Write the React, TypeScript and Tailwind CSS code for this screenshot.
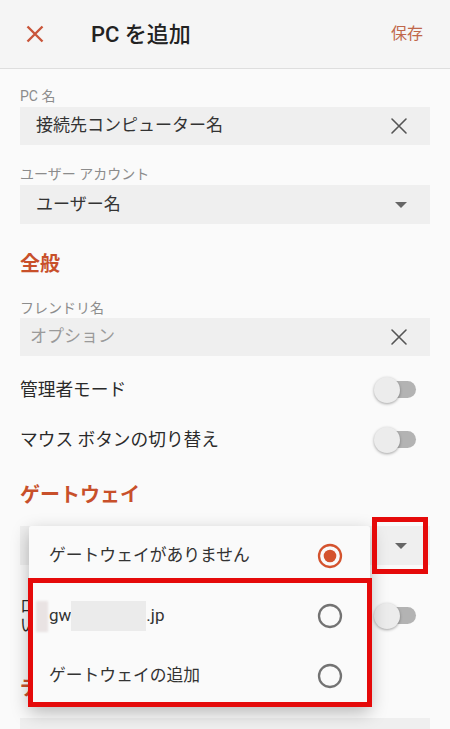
import { ReactNode } from "react";

const font = { fontFamily: 'Roboto, "Noto Sans CJK JP", sans-serif' };

function ClearIcon() {
  return (
    <svg width="18" height="18" viewBox="0 0 18 18" className="shrink-0">
      <path d="M2 2L16 16M16 2L2 16" stroke="#555" strokeWidth="1.6" strokeLinecap="round" />
    </svg>
  );
}

function Caret() {
  return (
    <svg width="12" height="6" viewBox="0 0 12 6" className="shrink-0">
      <path d="M0 0H12L6 6Z" fill="#666" />
    </svg>
  );
}

function Toggle() {
  return (
    <div className="relative w-[42px] h-[26px] shrink-0">
      <div className="absolute left-[4px] right-0 top-[4px] h-[17px] rounded-full bg-[#b3b3b3]" />
      <div className="absolute left-0 top-0 w-[26px] h-[26px] rounded-full bg-[#ececec] shadow-[0_1px_3px_rgba(0,0,0,0.35)]" />
    </div>
  );
}

function Radio({ checked }: { checked?: boolean }) {
  return (
    <svg width="26" height="26" viewBox="0 0 26 26" className="shrink-0">
      <circle cx="13" cy="13" r="11" fill="none" stroke={checked ? "#d4532e" : "#737373"} strokeWidth="2.3" />
      {checked && <circle cx="13" cy="13" r="6.3" fill="#d4532e" />}
    </svg>
  );
}

function Label({ children, className = "" }: { children: ReactNode; className?: string }) {
  return <div className={`text-[14px] leading-[16px] text-[#8c8c8c] ${className}`}>{children}</div>;
}

function Heading({ children, className = "" }: { children: ReactNode; className?: string }) {
  return <div className={`text-[20px] leading-[24px] font-bold text-[#c8502a] ${className}`}>{children}</div>;
}

export default function App() {
  return (
    <div style={font} className="relative w-[450px] h-[729px] overflow-hidden bg-[#fafafa] text-[#2a2a2a]">
      {/* Header */}
      <div className="h-[69px] flex items-center bg-[#f5f5f5] border-b border-[#dedede] pl-[26px] pr-[27px]">
        <svg width="18" height="18" viewBox="0 0 18 18">
          <path d="M1.5 1.5L16.5 16.5M16.5 1.5L1.5 16.5" stroke="#c9553a" strokeWidth="2.4" />
        </svg>
        <div className="ml-[47px] text-[22px] font-medium text-[#222]">PC を追加</div>
        <div className="ml-auto text-[16px] text-[#c0674a]">保存</div>
      </div>

      {/* Form */}
      <div className="px-[20px] pt-[19px]">
        <Label>PC 名</Label>
        <div className="mt-[3px] h-[38px] bg-[#efefef] flex items-center pl-[16px] pr-[22px]">
          <span className="flex-1 text-[17px] text-[#333]">接続先コンピューター名</span>
          <ClearIcon />
        </div>

        <Label className="mt-[21px]">ユーザー アカウント</Label>
        <div className="mt-[3px] h-[39px] bg-[#efefef] flex items-center pl-[16px] pr-[23px]">
          <span className="flex-1 text-[17px] text-[#333]">ユーザー名</span>
          <Caret />
        </div>

        <Heading className="mt-[28px]">全般</Heading>

        <Label className="mt-[24px]">フレンドリ名</Label>
        <div className="mt-[2px] h-[38px] bg-[#efefef] flex items-center pl-[10px] pr-[22px]">
          <span className="flex-1 text-[17px] text-[#9a9a9a]">オプション</span>
          <ClearIcon />
        </div>

        <div className="mt-[9px] h-[50px] flex items-center justify-between pr-[14px]">
          <span className="text-[17.7px]">管理者モード</span>
          <Toggle />
        </div>
        <div className="h-[50px] flex items-center justify-between pr-[14px]">
          <span className="text-[17.7px]">マウス ボタンの切り替え</span>
          <Toggle />
        </div>

        <Heading className="mt-[18px]">ゲートウェイ</Heading>
        <div className="mt-[19px] h-[39px] bg-[#efefef] flex items-center justify-end pr-[23px]">
          <Caret />
        </div>

        <div className="mt-[32px] flex items-center justify-between pr-[14px]">
          <span className="whitespace-nowrap text-[16.5px] leading-[19px]">
            ローカル アドレスにはゲートウェイを使用しな
            <br />い
          </span>
          <Toggle />
        </div>

        <Heading className="mt-[41px]">デバイスとオーディオ</Heading>
        <div className="mt-[18px] h-[40px] bg-[#efefef]" />
      </div>

      {/* Dropdown menu */}
      <div className="absolute left-[29px] top-[526px] w-[341px] bg-[#fafafa] rounded-[2px] shadow-[0_6px_18px_rgba(0,0,0,0.28)]">
        <div className="h-[60px] flex items-center justify-between pl-[20px] pr-[27px]">
          <span className="text-[16.8px] text-[#333]">ゲートウェイがありません</span>
          <Radio checked />
        </div>
        <div className="h-[60px] flex items-center justify-between pl-[7px] pr-[27px]">
          <span className="flex items-center text-[17px] text-[#333]">
            <span className="w-[12px] h-[31px] bg-[#e9e3e3] blur-[1px]" />
            <span className="ml-px">gw</span>
            <span className="w-[75px] h-[30px] bg-[#ebebeb]" />
            <span>.jp</span>
          </span>
          <Radio />
        </div>
        <div className="h-[60px] flex items-center justify-between pl-[20px] pr-[27px]">
          <span className="text-[16.8px] text-[#333]">ゲートウェイの追加</span>
          <Radio />
        </div>
      </div>

      {/* Annotation boxes */}
      <div className="absolute left-[372px] top-[517px] w-[56px] h-[57px] border-[5px] border-[#e50a0a]" />
      <div className="absolute left-[28px] top-[578px] w-[344px] h-[129px] border-[5px] border-[#e50a0a]" />
    </div>
  );
}
